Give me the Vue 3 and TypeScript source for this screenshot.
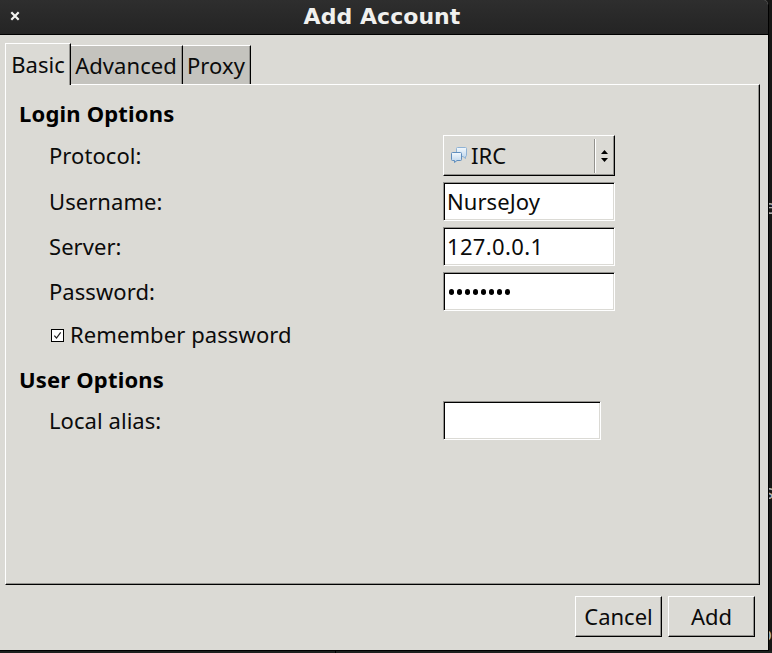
<script setup lang="ts">
import { ref } from 'vue'

interface Field {
  label: string
  value: string
  secret: boolean
}

const tabs: string[] = ['Basic', 'Advanced', 'Proxy']
const activeTab = ref<string>('Basic')
const fields: Field[] = [
  { label: 'Username:', value: 'NurseJoy', secret: false },
  { label: 'Server:', value: '127.0.0.1', secret: false },
  { label: 'Password:', value: 'pikachu1', secret: true },
]
const remember = ref<boolean>(true)
</script>

<template>
  <div class="screen">
    <div class="window">
      <header class="titlebar">
        <svg class="close" width="10" height="10" viewBox="0 0 10 10">
          <path d="M1.300 1.300L8.700 8.700M8.700 1.300L1.300 8.700" stroke="#f2f2f0" stroke-width="2.200" />
        </svg>
        <span class="title">Add Account</span>
      </header>
      <main class="content">
        <nav class="tabs">
          <div
            v-for="tab in tabs"
            :key="tab"
            class="tab"
            :class="[{ active: tab === activeTab }, tab.toLowerCase()]"
            @click="activeTab = tab"
          ><span>{{ tab }}</span></div>
        </nav>
        <section class="panel">
          <h2 class="heading">Login Options</h2>
          <div class="row protocol">
            <span class="label">Protocol:</span>
            <div class="combo">
              <svg class="chat" width="17" height="17" viewBox="0 0 17 17">
                <defs>
                  <linearGradient id="bubble" x1="0" y1="0" x2="0" y2="1">
                    <stop offset="0" stop-color="#f4f9fd" />
                    <stop offset="1" stop-color="#b9d2ea" />
                  </linearGradient>
                </defs>
                <path d="M6.500 .5H14.500Q15.500 .5 15.500 1.500V8.500Q15.500 9.500 14.500 9.500V11.500L12 9.500H6.500Q5.500 9.500 5.500 8.500V1.500Q5.500 .5 6.500 .5Z" fill="url(#bubble)" stroke="#8fb2d4" />
                <path d="M1.500 5.500H9.500Q10.500 5.500 10.500 6.500V12.500Q10.500 13.500 9.500 13.500H6L3.500 15.500V13.500H1.500Q.5 13.500 .5 12.500V6.500Q.5 5.500 1.500 5.500Z" fill="url(#bubble)" stroke="#5f8dbd" />
              </svg>
              <span class="combo-text">IRC</span>
              <span class="separator"></span>
              <svg class="arrows" width="7" height="12" viewBox="0 0 7 12">
                <path d="M3.500 0L7 4H0ZM0 8H7L3.500 12Z" fill="#000" />
              </svg>
            </div>
          </div>
          <div v-for="field in fields" :key="field.label" class="row">
            <span class="label">{{ field.label }}</span>
            <div class="entry">
              <span v-if="field.secret" class="dots">
                <i v-for="n in field.value.length" :key="n"></i>
              </span>
              <span v-else class="value" :class="{ numeric: /^[\d.]+$/.test(field.value) }">{{ field.value }}</span>
            </div>
          </div>
          <div class="check-row" @click="remember = !remember">
            <span class="checkbox">
              <svg v-if="remember" width="11" height="11" viewBox="0 0 11 11">
                <path d="M2.300 5.600L4.500 8L8.700 2.300" fill="none" stroke="#222" stroke-width="1.200" />
              </svg>
            </span>
            <span class="check-label">Remember password</span>
          </div>
          <h2 class="heading user">User Options</h2>
          <div class="row alias">
            <span class="label">Local alias:</span>
            <div class="entry short"></div>
          </div>
        </section>
        <footer class="actions">
          <button class="button">Cancel</button>
          <button class="button">Add</button>
        </footer>
      </main>
    </div>
    <aside class="behind">
      <span class="peek first">e</span>
      <span class="peek second">s</span>
      <span class="peek third">o</span>
    </aside>
    <div class="below"><span></span></div>
  </div>
</template>

<style>
body {
  margin: 0;
  background: #151515;
}
</style>

<style scoped>
.screen {
  width: 772px;
  height: 653px;
  display: grid;
  grid-template: 651px 2px / 769px 3px;
  overflow: hidden;
  background: #151515;
  font-family: "Noto Sans", sans-serif;
  font-size: 22px;
  letter-spacing: 0.06px;
  color: #0b0b0b;
}
.window {
  box-sizing: border-box;
  border-right: 1px solid #000;
  border-bottom: 1px solid #000;
  border-top-right-radius: 5px;
  background: #dbdad5;
  overflow: hidden;
}
.titlebar {
  box-sizing: border-box;
  display: flex;
  align-items: center;
  height: 35px;
  padding-left: 10px;
  border-bottom: 1px solid #000;
  background: linear-gradient(#2e2e2e, #242424);
}
.close {
  margin-top: -2px;
}
.title {
  flex: 1;
  padding-right: 24px;
  text-align: center;
  color: #f0f0ee;
  font: bold 22px/30px "DejaVu Sans", sans-serif;
  letter-spacing: 0.05px;
}
.content {
  padding: 8px 8px 0 5px;
}
.tabs {
  display: flex;
  align-items: flex-end;
  height: 41px;
}
.tab {
  box-sizing: border-box;
  height: 39px;
  padding-right: 1px;
  border-top: 1px solid #fff;
  border-right: 1px solid #000;
  box-shadow: inset -1px 0 #93928e;
  background: #c4c3be;
  line-height: 38px;
  text-align: center;
  white-space: nowrap;
}
.tab.active {
  height: 42px;
  margin-bottom: -1px;
  padding-right: 0;
  border-left: 1px solid #fff;
  background: #dbdad5;
  line-height: 40px;
  position: relative;
}
.basic {
  width: 66px;
}
.advanced {
  width: 112px;
}
.proxy {
  width: 68px;
}
.panel {
  box-sizing: border-box;
  width: 755px;
  height: 501px;
  padding: 14px 0 0 13px;
  border-top: 1px solid #fff;
  border-left: 1px solid #fff;
  border-right: 1px solid #000;
  border-bottom: 1px solid #000;
  box-shadow: inset -1px -1px #93928e;
}
.heading {
  margin: 0;
  height: 30px;
  font-size: 22px;
  font-weight: 700;
  letter-spacing: 0.18px;
  line-height: 28px;
  color: #000;
}
.label,
.value,
.combo-text,
.check-label {
  padding-bottom: 2px;
}
.row {
  display: grid;
  grid-template-columns: 394px auto;
  justify-content: start;
  align-items: center;
  height: 39px;
  margin: 0 0 6px 30px;
}
.row.protocol {
  height: 41px;
  margin-top: 6px;
}
.combo {
  box-sizing: border-box;
  display: flex;
  align-items: center;
  width: 172px;
  height: 41px;
  padding-left: 7px;
  border: 1px solid #000;
  border-top-color: #fff;
  border-left-color: #fff;
  box-shadow: inset -1px -1px #93928e;
}
.combo-text {
  width: 123px;
  margin-left: 3px;
}
.separator {
  width: 1px;
  height: 34px;
  border-left: 1px solid #93928e;
  background: #fff;
}
.arrows {
  margin-left: 5px;
}
.entry {
  box-sizing: border-box;
  display: flex;
  align-items: center;
  width: 172px;
  height: 39px;
  padding-left: 3px;
  border: 1px solid #fff;
  border-top-color: #93928e;
  border-left-color: #93928e;
  box-shadow: inset 1px 1px #000, inset -1px -1px #dbdad5;
  background: #fff;
}
.entry.short {
  width: 158px;
}
.numeric {
  letter-spacing: 0.35px;
}
.dots {
  display: flex;
  gap: 3px;
  padding: 1px 0 0 1.5px;
}
.dots i {
  width: 5px;
  height: 5.5px;
  border-radius: 50%;
  background: #000;
}
.check-row {
  display: flex;
  align-items: center;
  height: 30px;
  margin: 9px 0 0 32px;
}
.checkbox {
  display: flex;
  width: 11px;
  height: 11px;
  border: 1px solid #000;
  background: #fff;
}
.check-label {
  margin-left: 6px;
  letter-spacing: 0.09px;
}
.heading.user {
  margin-top: 15px;
}
.row.alias {
  margin-top: 6px;
}
.actions {
  display: flex;
  justify-content: flex-end;
  gap: 6px;
  padding: 11px 5px 0 0;
}
.button {
  width: 87px;
  height: 41px;
  padding: 0 0 2px 0;
  border: 1px solid #000;
  border-top-color: #fff;
  border-left-color: #fff;
  box-shadow: inset -1px -1px #93928e;
  background: #dbdad5;
  color: #0b0b0b;
  font: 22px/36px "Noto Sans", sans-serif;
}
.behind {
  display: flex;
  flex-direction: column;
  overflow: hidden;
  background: #171715;
  color: #b0b0b0;
  font-size: 20px;
  line-height: 24px;
}
.peek {
  margin-left: -5px;
}
.first {
  padding-top: 195px;
}
.second {
  padding-top: 261px;
}
.third {
  margin-left: -9px;
  padding-top: 118px;
}
.below {
  grid-column: 1 / 3;
  background: #1c201e;
}
.below span {
  display: block;
  width: 1px;
  height: 2px;
  margin-left: 335px;
  background: #000;
}
</style>
